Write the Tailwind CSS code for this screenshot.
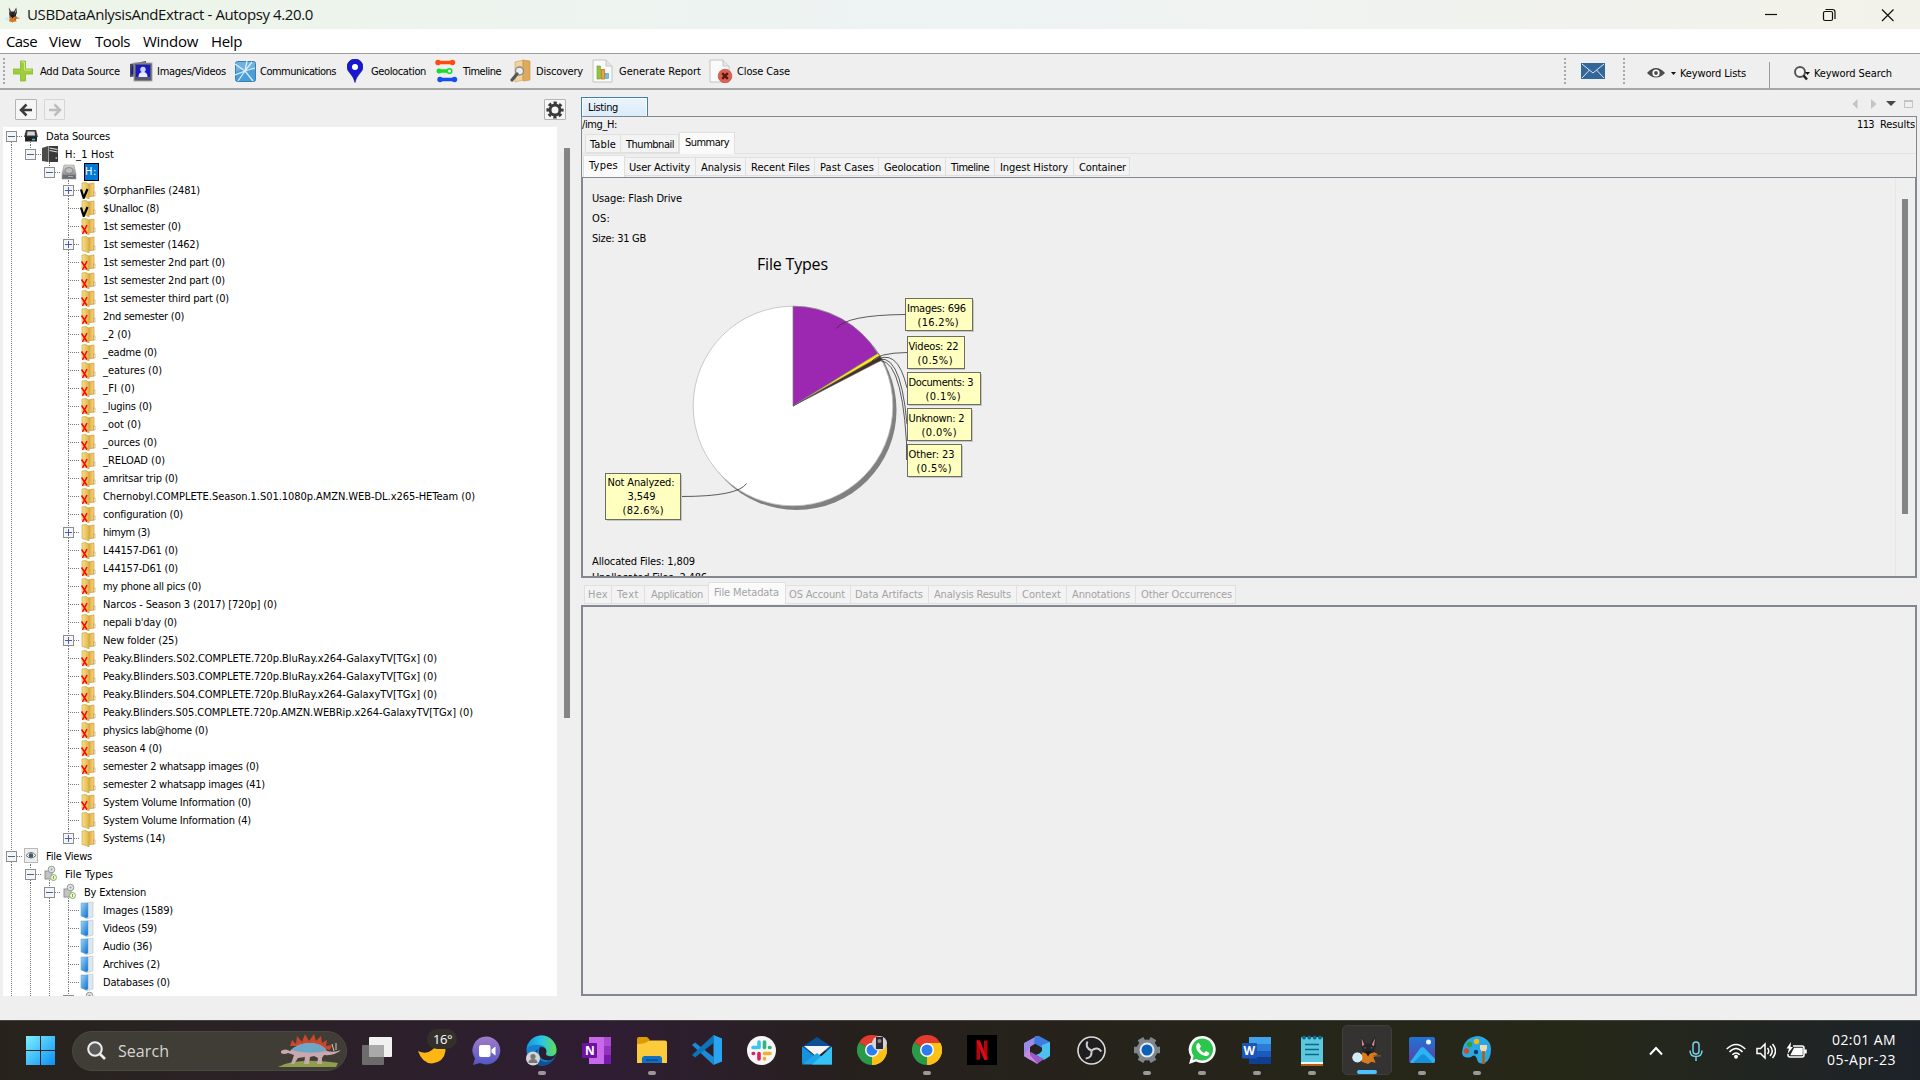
<!DOCTYPE html>
<html lang="en">
<head>
<meta charset="utf-8">
<title>USBDataAnlysisAndExtract - Autopsy 4.20.0</title>
<script src="https://cdn.jsdelivr.net/npm/@tailwindcss/browser@4"></script>
</head>
<body class="w-[1920px] h-[1080px] overflow-hidden bg-[#efefef] flex flex-col text-black font-['DejaVu_Sans_Condensed','DejaVu_Sans',sans-serif] text-[11px] leading-[16px] whitespace-nowrap">

<!-- shared symbols -->
<svg class="absolute w-0 h-0">
  <linearGradient id="gFold" x1="0" x2="1"><stop offset="0" stop-color="#f6e08a"/><stop offset="1" stop-color="#e0b548"/></linearGradient>
  <linearGradient id="gFold2" x1="0" x2="1"><stop offset="0" stop-color="#d9a53c"/><stop offset="1" stop-color="#fbd57a"/></linearGradient>
  <linearGradient id="gBlue" x1="0" x2="1" y2="1"><stop offset="0" stop-color="#9fd4f5"/><stop offset="1" stop-color="#0b6fd0"/></linearGradient>
  <linearGradient id="gGrey" y2="1" x2="0"><stop offset="0" stop-color="#d8d8d8"/><stop offset="1" stop-color="#6f6f74"/></linearGradient>
  <symbol id="dog" viewBox="0 0 28 28">
    <path d="M8.500 1l4 7h5l4-7 1 9-1.500 4v3l2 1-1 1-2 6h-7l-4-5 1-4-1-4z" fill="#23272b"/>
    <path d="M9 3l2.500 6-2 1.500zM21.500 3l-3 6 2 1.500z" fill="#d98c86"/>
    <path d="M10 16l5 2 6-2 3 2-4 3 2 5-4-1-3 2-6-2-1-5z" fill="#d77a1c"/>
    <path d="M12 15h6l-3 5z" fill="#14171a"/><path d="M11.500 12h1.500M17.500 12H19M20 19.500h7" stroke="#8d5a2a" stroke-width="1.200"/>
    <circle cx="5" cy="21" r="4.200" fill="#cdeef7" stroke="#eafaff" stroke-width="1"/>
  </symbol>
  <symbol id="chrome" viewBox="0 0 30 30">
    <path d="M15 15L2 7.500A15 15 0 0 1 28 7.500z" fill="#e33b2e"/>
    <path d="M15 15L28 7.500A15 15 0 0 1 15 30z" fill="#fbc116"/>
    <path d="M15 15L15 30A15 15 0 0 1 2 7.500z" fill="#2a9a48"/>
    <path d="M15 8h13.300a15 15 0 0 1-13 22l6-11z" fill="#fbc116"/><path d="M2 7.500l7 11 6 3.500-1 7.500" fill="#2a9a48"/>
    <circle cx="15" cy="15" r="7" fill="#fff"/><circle cx="15" cy="15" r="5.500" fill="#2d7df0"/>
  </symbol>
</svg>

<!-- title bar -->
<header class="h-[29px] shrink-0 flex items-center bg-linear-to-r from-[#edf5e8] via-[#eef3f4] to-[#f3f2ea]">
  <svg class="ml-1 w-4 h-4"><use href="#dog"/></svg>
  <span class="ml-[7px] mb-px font-['Open_Sans',sans-serif] text-[15px] leading-5 text-[#111]" data-w="286">USBDataAnlysisAndExtract - Autopsy 4.20.0</span>
  <svg class="ml-auto mr-[25px] w-[132px] h-4" fill="none" stroke="#111" stroke-width="1.2">
    <path d="M2 7.500h12"/><rect x="60.500" y="4.500" width="9" height="9" rx="1.500"/><path d="M62.500 2.500h7q2.500 0 2.500 2.500v7"/><path d="M119 2.500l11.500 11.500M130.500 2.500L119 14"/>
  </svg>
</header>

<!-- menu bar -->
<nav class="h-6 shrink-0 bg-white flex items-center pl-1.5 font-['Open_Sans',sans-serif] text-[15px] leading-5">
  <div class="w-[43px]"><span data-w="31">Case</span></div>
  <div class="w-[46px]"><span data-w="32">View</span></div>
  <div class="w-[48px]"><span data-w="35">Tools</span></div>
  <div class="w-[68px]"><span data-w="55">Window</span></div>
  <div><span data-w="31">Help</span></div>
</nav>

<!-- toolbar -->
<div class="h-[37px] shrink-0 border-t border-[#9c9c9c] border-b-2 border-b-[#a6a6a6] flex items-center bg-[#efefef] [&_span]:inline-block [&_span]:pt-0.5">
  <svg class="w-[13px] h-[30px] shrink-0"><path d="M4 2v28" stroke="#a8a8a8" stroke-width="2" stroke-dasharray="2 2"/></svg>
  <svg class="w-5 h-6 shrink-0" viewBox="0 0 20 24"><path d="M7.500 2h5v8H20v5h-7.500v7h-5v-7H0v-5h7.500z" fill="#9fce3a" stroke="#86b52c" stroke-width=".8"/><path d="M8.500 3h3v8h7" stroke="#cdea85" fill="none"/></svg>
  <div class="ml-[7px] w-[88px]"><span data-w="80">Add Data Source</span></div>
  <svg class="w-[25px] h-6 shrink-0" viewBox="0 0 25 24"><path d="M2 5l16-3 1 14-17 2z" fill="#444a60"/><path d="M4 7l12-2v10H3z" fill="#1b1d8c"/><rect x="6" y="4" width="18" height="18" fill="#55596b" stroke="#aaa"/><rect x="8" y="6" width="14" height="12" fill="#1a1ac4"/><circle cx="15" cy="10.500" r="2.700" fill="#cfd4ff"/><path d="M10.500 18q0-5 4.500-5t4.500 5z" fill="#e9ebff"/></svg>
  <div class="ml-1 w-[78px]"><span data-w="69">Images/Videos</span></div>
  <svg class="w-[21px] h-[21px] shrink-0" viewBox="0 0 21 21"><rect x=".5" y=".5" width="20" height="20" rx="2" fill="#4d9ed6" stroke="#357fb8"/><path d="M0 3l10 7L17 1M10 10l10-3M10 10l8 10M10 10L3 20M0 14l10-4 2-10" stroke="#d5edfa" stroke-width="1.300" fill="none"/><path d="M1 1h19v8q-10-4-19 2z" fill="#fff" opacity=".2"/></svg>
  <div class="ml-[4px] w-[87px]"><span data-w="76">Communications</span></div>
  <svg class="w-4 h-6 shrink-0" viewBox="0 0 16 24"><path d="M8 23.500C6.500 16 0 13 0 8a8 8 0 0 1 16 0c0 5-6.500 8-8 15.500z" fill="#1717d0" stroke="#0b0b80" stroke-width=".6"/><circle cx="8" cy="8" r="3" fill="#fff"/></svg>
  <div class="ml-2 w-[64px]"><span data-w="55">Geolocation</span></div>
  <svg class="w-[23px] h-6 shrink-0" viewBox="0 0 23 24" stroke-linecap="round"><path d="M3 3.500h14" stroke="#ff4b12" stroke-width="3.500"/><path d="M4 12h8" stroke="#14e02a" stroke-width="3.500"/><path d="M5 20.500h14" stroke="#1450f0" stroke-width="3.500"/><circle cx="3" cy="3.500" r="2.700" fill="#ff4b12"/><circle cx="17.500" cy="3.500" r="2.700" fill="#ff4b12"/><circle cx="4" cy="12" r="2.500" fill="#14e02a"/><circle cx="14.500" cy="12" r="2.300" fill="#fff" stroke="#14e02a" stroke-width="1.600"/><circle cx="5" cy="20.500" r="2.700" fill="#1450f0"/><circle cx="19.500" cy="20.500" r="2.700" fill="#1450f0"/></svg>
  <div class="ml-[5px] w-[47px]"><span data-w="38">Timeline</span></div>
  <svg class="w-[22px] h-6 shrink-0" viewBox="0 0 22 24"><path d="M5 3l8-2v20l-8 2z" fill="#f3d39c" stroke="#cfa35b" stroke-width=".6"/><path d="M13 1l7 1v19l-7 1z" fill="#e0aa5c" stroke="#c28e42" stroke-width=".6"/><circle cx="9.500" cy="12" r="4" fill="#e8eef2" stroke="#888" stroke-width="1.300"/><path d="M7 15l-5 6" stroke="#555" stroke-width="3.200" stroke-linecap="round"/></svg>
  <div class="ml-[4px] w-[56px]"><span data-w="47">Discovery</span></div>
  <svg class="w-[21px] h-6 shrink-0" viewBox="0 0 21 24"><path d="M1 1h13l6 6v16H1z" fill="#fafafa" stroke="#c4c4c4"/><path d="M14 1v6h6" fill="#e6e6e6" stroke="#c4c4c4"/><rect x="5" y="7" width="3.500" height="13" fill="#8fc53a" stroke="#6d9d28" stroke-width=".6"/><rect x="9.500" y="10.500" width="3" height="9.500" fill="#f2a03a" stroke="#c17618" stroke-width=".8"/><rect x="13.500" y="14.500" width="3" height="5" fill="#63c6ea" stroke="#3a9cc4" stroke-width=".6"/></svg>
  <div class="ml-[6px] w-[90px]"><span data-w="82">Generate Report</span></div>
  <svg class="w-[24px] h-6 shrink-0" viewBox="0 0 24 24"><path d="M1 1h13l6 6v16H1z" fill="#fafafa" stroke="#c4c4c4"/><path d="M14 1v6h6" fill="#e6e6e6" stroke="#c4c4c4"/><circle cx="16" cy="17" r="6.800" fill="#dd6454" stroke="#b8483b" stroke-width=".7"/><path d="M13.200 14.200l5.600 5.600M18.800 14.200l-5.600 5.600" stroke="#5a1810" stroke-width="2.400"/></svg>
  <div class="ml-[4px] w-[60px]"><span data-w="53">Close Case</span></div>
  <div class="ml-auto flex items-center h-full">
    <svg class="w-5 h-[30px]"><path d="M4 2v28" stroke="#a8a8a8" stroke-width="2" stroke-dasharray="2 2"/></svg>
    <svg class="w-6 h-4 mb-[1px]" viewBox="0 0 24 16"><rect width="24" height="16" fill="#336699"/><path d="M1 1l11 9L23 1M1 15l7.500-8M23 15l-7.500-8" stroke="#dce6f0" fill="none"/></svg>
    <svg class="w-[27px] h-[30px]"><path d="M19 2v28" stroke="#a8a8a8" stroke-width="2" stroke-dasharray="2 2"/></svg>
    <svg class="ml-[15px] w-[30px] h-3.5 mt-1" viewBox="0 0 30 14"><path d="M0 7Q9-3 18 7Q9 16 0 7z" fill="#4c4c4c"/><circle cx="9" cy="7" r="3.600" fill="#fff"/><circle cx="9" cy="7" r="1.900" fill="#4c4c4c"/><path d="M24 6h5l-2.500 3z" fill="#111"/></svg>
    <div class="ml-[3px] mt-1 w-[89px]"><span data-w="66">Keyword Lists</span></div>
    <div class="w-px h-[27px] mt-2 bg-[#9c9c9c]"></div>
    <svg class="ml-[24px] w-4 h-4 mt-1" viewBox="0 0 16 16"><circle cx="6" cy="7" r="5" fill="#f4f4f4" stroke="#555" stroke-width="2"/><path d="M9.500 10.500l3.500 4" stroke="#222" stroke-width="2.500"/><path d="M11 7h5l-2.500 3z" fill="#111"/></svg>
    <div class="ml-[4px] mt-1 w-[106px]"><span data-w="78">Keyword Search</span></div>
  </div>
</div>

<!-- work area -->
<main class="h-[930px] shrink-0 flex">
  <!-- explorer -->
  <section class="w-[581px] shrink-0 flex flex-col">
    <div class="h-[37px] shrink-0 flex items-start pt-[9px] pl-[15px] gap-[7px]">
      <div class="w-[22px] h-[21px] border border-[#b4b4b4] bg-[#f6f6f6] rounded-[1px] grid place-items-center"><svg class="w-3.5 h-3.5" fill="none" stroke="#3c3c3c" stroke-width="2.500"><path d="M13 7H3M7.500 1.500L2 7l5.500 5.500"/></svg></div>
      <div class="w-[21px] h-[21px] border border-[#d6d6d6] bg-[#f1f1f1] rounded-[1px] grid place-items-center"><svg class="w-3.5 h-3.5" fill="none" stroke="#bdbdbd" stroke-width="2.500"><path d="M1 7h10M6.500 1.500L12 7l-5.500 5.500"/></svg></div>
      <div class="ml-auto mr-[15px] w-[22px] h-[21px] border border-[#b4b4b4] bg-[#f6f6f6] rounded-[1px] grid place-items-center"><svg class="w-[18px] h-[18px]" viewBox="-9 -9 18 18"><circle r="7.200" fill="none" stroke="#3a3a3a" stroke-width="2.800" stroke-dasharray="3.200 2.455" stroke-dashoffset="1.600"/><circle r="5" fill="none" stroke="#3a3a3a" stroke-width="3"/></svg></div>
    </div>
    <div class="flex pl-[3px]">
      <div id="tree" class="w-[554px] h-[869px] bg-white overflow-hidden"></div>
      <div class="ml-[7px] mt-[21px] w-1.5 h-[570px] bg-[#858585]"></div>
    </div>
  </section>

  <!-- listing -->
  <section class="w-[1336px] shrink-0 flex flex-col">
    <div class="mt-[7px] h-[19px] shrink-0 flex items-end">
      <div class="w-[67px] h-[20px] self-start border border-b-0 border-[#3c7fb1] bg-linear-to-b from-[#ebf4fc] to-[#d9ebfa] ring-1 ring-inset ring-white pl-[6px] pt-[2px]"><span data-w="30">Listing</span></div>
      <div class="flex-1 flex justify-end pr-[3px] pb-[6px]">
        <svg class="w-[62px] h-[12px]"><path d="M5.500 1v10l-5-5z" fill="#c4c4c4"/><path d="M19 1v10l5.500-5z" fill="#c4c4c4"/><path d="M34 3h10l-5 5z" fill="#484848"/><rect x="52.500" y="3" width="8" height="6.500" fill="none" stroke="#c4c4c4"/><path d="M52 3h9" stroke="#c4c4c4" stroke-width="2"/></svg>
      </div>
    </div>
    <div class="h-[462px] shrink-0 border-t border-l border-r border-[#828790] flex flex-col">
      <div class="h-[15px] shrink-0 flex justify-between pr-px"><span data-w="35">/img_H:</span><span class="flex gap-[6px]"><span data-w="17">113</span><span data-w="35">Results</span></span></div>
      <div class="h-[22px] shrink-0 flex items-end pl-[3px] border-b border-[#e2e2e2]">
        <div class="h-[19px] w-[36px] border border-[#e0e0e0] bg-[#f3f3f3] pl-[4px] pt-[2px]"><span data-w="26">Table</span></div>
        <div class="h-[19px] w-[58px] border border-l-0 border-[#e0e0e0] bg-[#f3f3f3] pl-[5px] pt-[2px]"><span data-w="48">Thumbnail</span></div>
        <div class="h-[22px] -mb-px w-[56px] border border-b-0 border-[#e0e0e0] bg-[#fafafa] pl-[5px] pt-[2px]"><span data-w="44">Summary</span></div>
      </div>
      <div class="h-[23px] shrink-0 flex items-end pl-px">
        <div class="h-[22px] w-[42px] border border-b-0 border-[#e0e0e0] bg-[#fafafa] pl-[5px] pt-[2px]"><span data-w="29">Types</span></div>
        <div class="h-[19px] mb-px w-[71px] border-y border-r border-[#e0e0e0] bg-[#f3f3f3] pl-[4px] pt-[2px]"><span data-w="61">User Activity</span></div>
        <div class="h-[19px] mb-px w-[50px] border-y border-r border-[#e0e0e0] bg-[#f3f3f3] pl-[5px] pt-[2px]"><span data-w="40">Analysis</span></div>
        <div class="h-[19px] mb-px w-[69px] border-y border-r border-[#e0e0e0] bg-[#f3f3f3] pl-[5px] pt-[2px]"><span data-w="59">Recent Files</span></div>
        <div class="h-[19px] mb-px w-[64px] border-y border-r border-[#e0e0e0] bg-[#f3f3f3] pl-[5px] pt-[2px]"><span data-w="54">Past Cases</span></div>
        <div class="h-[19px] mb-px w-[67px] border-y border-r border-[#e0e0e0] bg-[#f3f3f3] pl-[5px] pt-[2px]"><span data-w="57">Geolocation</span></div>
        <div class="h-[19px] mb-px w-[49px] border-y border-r border-[#e0e0e0] bg-[#f3f3f3] pl-[5px] pt-[2px]"><span data-w="38">Timeline</span></div>
        <div class="h-[19px] mb-px w-[79px] border-y border-r border-[#e0e0e0] bg-[#f3f3f3] pl-[5px] pt-[2px]"><span data-w="68">Ingest History</span></div>
        <div class="h-[19px] mb-px w-[56px] border-y border-r border-[#e0e0e0] bg-[#f3f3f3] pl-[5px] pt-[2px]"><span data-w="47">Container</span></div>
      </div>
      <div class="flex-1 min-h-0 overflow-hidden border-t border-b-2 border-l border-r border-[#828790] flex">
        <div class="flex-1 pl-[9px] pt-[13px]">
          <p class="h-5"><span data-w="90">Usage: Flash Drive</span></p>
          <p class="h-5"><span data-w="18">OS:</span></p>
          <p class="h-[14px]"><span data-w="54">Size: 31 GB</span></p>
          <svg class="block w-[420px] h-[309px]" viewBox="592 245 420 309">
            <text x="757" y="270" textLength="71" fill="#000" class="font-['Open_Sans',sans-serif] text-[16px]">File Types</text>
            <circle cx="796.500" cy="410" r="100" fill="#808080"/>
            <circle cx="793" cy="406" r="99.800" fill="#fff" stroke="#bdbdbd" stroke-width=".8"/>
            <path d="M793 406V306.200A99.800 99.800 0 0 1 877.900 353.600z" fill="#9c27b0" stroke="#808080" stroke-width=".7"/>
            <path d="M793 406L877.900 353.600A99.800 99.800 0 0 1 879.600 356.400z" fill="#ffee10" stroke="#808080" stroke-width=".6"/>
            <path d="M793 406L880 356.600A99.800 99.800 0 0 1 881.800 360z" fill="#4a2c28" stroke="#555" stroke-width=".6"/>
            <g fill="none" stroke="#333" stroke-width=".8">
              <path d="M836.500 328.500Q846 315 905 314.500"/>
              <path d="M872 361Q878 353 907 352.500"/>
              <path d="M873 362Q897 345 907 388"/>
              <path d="M873 362Q900 345 907 424"/>
              <path d="M874 362Q901 350 906.500 442V460"/>
              <path d="M746.500 483.500Q738 496.500 681 496.500"/>
            </g>
            <g fill="#c6c6c6">
              <rect x="907" y="300" width="67" height="32"/><rect x="909" y="338" width="56" height="32"/><rect x="909" y="374" width="73" height="32"/><rect x="909" y="410" width="64" height="32"/><rect x="909" y="446" width="54" height="32"/><rect x="607" y="475" width="75" height="46"/>
            </g>
            <g fill="#ffffc0" stroke="#6e6e5e">
              <rect x="905.500" y="298.500" width="67" height="32"/><rect x="907.500" y="336.500" width="57" height="32"/><rect x="907.500" y="372.500" width="73" height="32"/><rect x="907.500" y="408.500" width="64" height="32"/><rect x="907.500" y="444.500" width="54" height="32"/><rect x="605.500" y="473.500" width="75" height="46"/>
            </g>
            <g font-size="11" fill="#000">
              <text x="907" y="312" textLength="59">Images: 696</text><text x="917.500" y="326" textLength="41">(16.2%)</text>
              <text x="908.500" y="350" textLength="50">Videos: 22</text><text x="917.500" y="364" textLength="35">(0.5%)</text>
              <text x="908.500" y="386" textLength="65">Documents: 3</text><text x="925.500" y="400" textLength="35">(0.1%)</text>
              <text x="908.500" y="422" textLength="56">Unknown: 2</text><text x="921.500" y="436" textLength="35">(0.0%)</text>
              <text x="908.500" y="458" textLength="46">Other: 23</text><text x="916.500" y="472" textLength="35">(0.5%)</text>
              <text x="607.500" y="486" textLength="67">Not Analyzed:</text><text x="627.500" y="500" textLength="28">3,549</text><text x="622.500" y="514" textLength="41">(82.6%)</text>
            </g>
          </svg>
          <p class="h-4"><span data-w="103">Allocated Files: 1,809</span></p>
          <p class="h-4"><span data-w="115">Unallocated Files: 2,486</span></p>
        </div>
        <div class="w-[20px] border-l border-[#e6e6e6]"><div class="ml-[6px] mt-[21px] w-1.5 h-[315px] bg-[#858585]"></div></div>
      </div>
    </div>

    <!-- content viewers -->
    <div class="h-[27px] shrink-0 flex items-end pl-[3px] pb-px text-[#a3a3a3]">
      <div class="h-[19px] w-[28px] border border-[#e0e0e0] bg-[#f3f3f3] pl-[3px] pt-px"><span data-w="20">Hex</span></div>
      <div class="h-[19px] w-[33px] border-y border-r border-[#e0e0e0] bg-[#f3f3f3] pl-[5px] pt-px"><span data-w="22">Text</span></div>
      <div class="h-[19px] w-[63px] border-y border-[#e0e0e0] bg-[#f3f3f3] pl-[6px] pt-px"><span data-w="52">Application</span></div>
      <div class="h-[22px] w-[78px] border border-b-0 border-[#e0e0e0] bg-[#fafafa] pl-[5px] pt-[2px]"><span data-w="65">File Metadata</span></div>
      <div class="h-[19px] w-[65px] border-y border-r border-[#e0e0e0] bg-[#f3f3f3] pl-[3px] pt-px"><span data-w="56">OS Account</span></div>
      <div class="h-[19px] w-[78px] border-y border-r border-[#e0e0e0] bg-[#f3f3f3] pl-[4px] pt-px"><span data-w="68">Data Artifacts</span></div>
      <div class="h-[19px] w-[88px] border-y border-r border-[#e0e0e0] bg-[#f3f3f3] pl-[5px] pt-px"><span data-w="77">Analysis Results</span></div>
      <div class="h-[19px] w-[50px] border-y border-r border-[#e0e0e0] bg-[#f3f3f3] pl-[5px] pt-px"><span data-w="39">Context</span></div>
      <div class="h-[19px] w-[69px] border-y border-r border-[#e0e0e0] bg-[#f3f3f3] pl-[5px] pt-px"><span data-w="58">Annotations</span></div>
      <div class="h-[19px] w-[100px] border-y border-r border-[#e0e0e0] bg-[#f3f3f3] pl-[5px] pt-px"><span data-w="91">Other Occurrences</span></div>
    </div>
    <div class="h-[391px] shrink-0 border-2 border-[#828790]"></div>
  </section>
</main>

<!-- taskbar -->
<footer class="h-[60px] shrink-0 border-t border-[#45443f] flex items-center text-white font-['Open_Sans',sans-serif] bg-linear-to-r from-[#27231c] from-0% via-[#2f1d33] via-32% to-[#26201d] to-44% relative">
  <div class="absolute inset-0 bg-linear-to-r from-transparent from-44% via-[#262817] via-82% to-[#1d2229] to-100%"></div>
  <div class="relative flex items-center w-full h-full">
    <svg class="ml-[26px] w-[29px] h-[29px] shrink-0" viewBox="0 0 29 29"><linearGradient id="gw" x2="1" y2="1"><stop stop-color="#7df0ff"/><stop offset="1" stop-color="#0a90f5"/></linearGradient><path d="M0 0h14v14H0zM15 0h14v14H15zM0 15h14v14H0zM15 15h14v14H15z" fill="url(#gw)"/></svg>
    <div class="ml-[17px] w-[275px] h-10 rounded-full bg-[#403d36] border border-[#4a4842] flex items-center shrink-0">
      <svg class="ml-[14px] w-[19px] h-[19px]" fill="none" stroke="#eee" stroke-width="2"><circle cx="8" cy="8" r="6.800" fill="#5a5a5a"/><path d="M13 13l5 5" stroke-width="2.600"/></svg>
      <span class="ml-[12px] text-[16px] leading-5 text-[#d6d5d3]" data-w="51">Search</span>
      <svg class="ml-auto mr-[4px] w-[64px] h-[34px]" viewBox="0 0 64 34">
        <path d="M0 33q18-10 60-4l-2 4z" fill="#8f9d4c"/>
        <path d="M12 12l2-6 4 4 1-8 5 6 3-8 4 7 5-7 2 7 5-5 1 7 5-3-1 6 6-1-2 5-20-4z" fill="#c9472c"/>
        <path d="M3 17q4-3 9 0 8-8 20-8 12 0 17 8 7 2 14-1-6 6-17 5l-2 3v6h-5l1-6-4-2-4 1-1 7h-5l1-7-7 1-4 6h-3l3-9-6-2q-4 2-7 0z" fill="#c9a7ae"/>
        <path d="M13 16q8-7 19-7t17 8q-18 4-36-1z" fill="#6da6c6"/>
        <path d="M54 10l2 7M58 9v7" stroke="#d8c9bb"/>
      </svg>
    </div>
    <svg class="ml-[15px] w-[30px] h-[28px] shrink-0" viewBox="0 0 30 28"><rect x="7" width="23" height="20" rx="1" fill="#f1f1f1"/><rect y="8" width="22" height="20" rx="1" fill="#6c6c6c"/><path d="M7 8h15v12H7z" fill="#a9a9a9"/></svg>
    <div class="ml-[26px] w-[41px] h-full relative shrink-0">
      <svg class="absolute top-[19px] left-0 w-7 h-6" viewBox="0 0 28 24"><path d="M0 11q8 4 14-1t3-10Q28 2 27.500 11 26 22 14 23.500 4 23 0 11z" fill="#fdb614"/></svg>
      <div class="absolute left-[9px] top-[8px] w-[30px] h-5 rounded-full bg-[#33302c]"></div>
      <span class="absolute left-[15px] top-[9px] text-[13px] leading-[18px]" data-w="19">16°</span>
    </div>

    <!-- pinned and running apps -->
    <div class="flex h-full">
      <div class="w-[55px] h-full flex flex-col items-center pt-[15px]"><svg class="w-[30px] h-[30px]" viewBox="0 0 30 30"><linearGradient id="gc" x2="0" y2="1"><stop stop-color="#a27bc8"/><stop offset="1" stop-color="#4f57c8"/></linearGradient><path d="M15 .5a14 14 0 1 1-7 26.500l-7 2 2-6.500A14 14 0 0 1 15 .5z" fill="url(#gc)"/><rect x="7" y="9" width="11.500" height="12" rx="2" fill="#fff"/><path d="M19.500 13.500l4-3v9l-4-3z" fill="#fff"/></svg></div>
      <div class="w-[55px] h-full flex flex-col items-center pt-[14px]"><svg class="w-[31px] h-[31px]" viewBox="0 0 31 31"><linearGradient id="ge" x1="0" x2="1"><stop stop-color="#1794d8"/><stop offset=".5" stop-color="#2cc4e6"/><stop offset="1" stop-color="#5fe04f"/></linearGradient><circle cx="15.500" cy="15.500" r="15" fill="#1480cf"/><path d="M.6 14A15 15 0 0 1 30.500 15q0 6-6 6-6-.5-4.500-3.500 1-7-6-7.500Q5 9 .6 14z" fill="url(#ge)"/><path d="M12 14q-3 8 4 12 6 2.500 12-2-5 7.500-13 7-8-1-8-9 0-5 5-8z" fill="#114f92"/><path d="M14 12q7 0 6.500 5-2 4 4 4.500 4-.3 5.500-3-1 6-7 7-9 0-10-7-.5-4 1-6.500z" fill="#2a1d30"/><circle cx="7" cy="23.500" r="7" fill="#d4d4d4"/><circle cx="7" cy="21.500" r="2.600" fill="#777"/><path d="M2.500 28q0-4 4.500-4t4.500 4z" fill="#777"/></svg><i class="mt-[5px] w-2 h-1 rounded-full bg-[#9c9899]"></i></div>
      <div class="w-[55px] h-full flex flex-col items-center pt-[15px]"><svg class="w-[29px] h-[29px]" viewBox="0 0 29 29"><path d="M7 1h15v27H7z" fill="#c969ea"/><path d="M22 1h7v9h-7z" fill="#ae4bd5"/><path d="M22 10h7v9h-7z" fill="#9332bf"/><path d="M22 19h7v9h-7z" fill="#7719aa"/><rect y="7" width="15" height="15" rx="1" fill="#6f12a4"/><text x="3" y="19" font-size="12" font-weight="700" fill="#fff">N</text></svg></div>
      <div class="w-[55px] h-full flex flex-col items-center pt-[15px]"><svg class="w-[30px] h-[30px]" viewBox="0 0 30 30"><path d="M0 3q0-2 2-2h8l3 3h-1v6H0z" fill="#dd9b08"/><path d="M0 8q9 0 12-3.500h16q2 0 2 2V27H0z" fill="#fccb3c"/><path d="M5 27v-4q0-3 3-3h14q3 0 3 3v4z" fill="#1170c4"/><path d="M9 24h12" stroke="#0a4a8a" stroke-width="1.500"/></svg><i class="mt-[5px] w-2 h-1 rounded-full bg-[#9c9899]"></i></div>
      <div class="w-[55px] h-full flex flex-col items-center pt-[14px]"><svg class="w-[30px] h-[30px]" viewBox="0 0 30 30"><path d="M0 10l3-2.500 18.500 14.500v8z" fill="#1b8ada"/><path d="M0 20l3 2.500L21.500 8V0z" fill="#0b74ba"/><path d="M21.500 0L30 3.500v23L21.500 30z" fill="#27a4f2"/></svg></div>
      <div class="w-[55px] h-full flex flex-col items-center pt-[15px]"><svg class="w-[29px] h-[29px]" viewBox="0 0 29 29" stroke-width="3.600" stroke-linecap="round"><circle cx="14.500" cy="14.500" r="14.500" fill="#f6f6f6" stroke="none"/><path d="M12 6v5.500M6 11.500h4" stroke="#36c5f0"/><path d="M17.500 6v5.500M23 11.500h-.5" stroke="#2eb67d"/><path d="M17.500 17.500H23M17.500 23v-.5" stroke="#ecb22e"/><path d="M12 17.500V23M6.200 17.500h.4" stroke="#e01e5a"/></svg></div>
      <div class="w-[55px] h-full flex flex-col items-center pt-[15px]"><svg class="w-[30px] h-[30px]" viewBox="0 0 30 30"><path d="M0 11L15 1l15 10v4H0z" fill="#0c4f93"/><path d="M2 10h26L15 21z" fill="#f4f4f4"/><path d="M0 10.500l15 11L0 28z" fill="#1593e0"/><path d="M0 28.500h30L15 17z" fill="#1fa6ea"/><path d="M30 10.500L10 28.500h20z" fill="#36c3f4"/></svg></div>
      <div class="w-[55px] h-full flex flex-col items-center pt-[14px] relative"><svg class="w-[30px] h-[30px]"><use href="#chrome"/></svg><svg class="absolute left-[28px] top-[15px] w-[15px] h-[15px]"><circle cx="7.500" cy="7.500" r="7.500" fill="#d5d5d5"/><path d="M4 1h7v12H4z" fill="#252a33"/><circle cx="7.500" cy="5" r="2" fill="#9d8078"/></svg></div>
      <div class="w-[55px] h-full flex flex-col items-center pt-[14px]"><svg class="w-[30px] h-[30px]"><use href="#chrome"/></svg><i class="mt-[6px] w-2 h-1 rounded-full bg-[#9c9899]"></i></div>
      <div class="w-[55px] h-full flex flex-col items-center pt-[14px]"><svg class="w-[30px] h-[30px]" viewBox="0 0 30 30"><rect width="30" height="30" fill="#000"/><path d="M9.500 5.500h3.500v19l-3.500.5zM17 5.500h3.500V25L17 24.500z" fill="#b20710"/><path d="M9.500 5.500H13l7.500 19.500-3.500-.5z" fill="#e50914"/></svg></div>
      <div class="w-[55px] h-full flex flex-col items-center pt-[15px]"><svg class="w-[28px] h-[29px]" viewBox="0 0 28 29"><path d="M14 0L1 7v13l6 4V11l9-6z" fill="#9b8be8"/><path d="M12 0h4l11 6v10l-8-4-8-5z" fill="#3f7ce0"/><path d="M27 6v14l-6 4-8-5 6-4V9z" fill="#4cc0ee"/><path d="M1 20l7-4 7 4 6 3-7 5z" fill="#9a58c8"/><path d="M1 20l6-9v8l8 9z" fill="#c48cda"/><circle cx="14" cy="14" r="4.300" fill="#25221f"/></svg></div>
      <div class="w-[55px] h-full flex flex-col items-center pt-[15px]"><svg class="w-[29px] h-[29px]" viewBox="-14.500 -14.500 29 29"><circle r="13.500" fill="#201e1f" stroke="#dcdcdc" stroke-width="1.600"/><g fill="none" stroke="#cfcfcf" stroke-width="2"><path d="M0 0q-7-3-4-9"/><path d="M0 0q-7-3-4-9" transform="rotate(120)"/><path d="M0 0q-7-3-4-9" transform="rotate(240)"/></g></svg></div>
      <div class="w-[55px] h-full flex flex-col items-center pt-[14px]"><svg class="w-[30px] h-[30px]" viewBox="-15 -15 30 30"><circle r="10.500" fill="#7d868d"/><g stroke="#7d868d" stroke-width="6.500" stroke-linejoin="round"><path d="M-13-0H13"/><path d="M-13-0H13" transform="rotate(60)"/><path d="M-13-0H13" transform="rotate(120)"/></g><circle r="7.500" fill="#e6e9eb"/><circle r="5.500" fill="#0c60b5"/></svg><i class="mt-[6px] w-2 h-1 rounded-full bg-[#9c9899]"></i></div>
      <div class="w-[55px] h-full flex flex-col items-center pt-[14px]"><svg class="w-[28px] h-[30px]" viewBox="0 0 28 30"><path d="M14 1a13.500 13.500 0 1 1-6 25.500L1 29l2-7A13.500 13.500 0 0 1 14 1z" fill="#fff"/><path d="M14 3.500a11 11 0 1 1-5.500 20.500L4.500 25l1.200-4A11 11 0 0 1 14 3.500z" fill="#2cc64e"/><path d="M9 8.500l2-.5 2 3.500-1.500 2q1.500 3 4.500 4.500l2-2 3.500 2q-.5 3-3.500 3-5-.5-8-4.500-3-4-1-8z" fill="#fff"/></svg><i class="mt-[6px] w-2 h-1 rounded-full bg-[#9c9899]"></i></div>
      <div class="w-[55px] h-full flex flex-col items-center pt-[15px]"><svg class="w-[29px] h-[29px]" viewBox="0 0 29 29"><path d="M7 1h22v7H7z" fill="#41a5ee"/><path d="M7 8h22v7H7z" fill="#2b7cd3"/><path d="M7 15h22v6.500H7z" fill="#185abd"/><path d="M7 21.500h22V28H7z" fill="#103f91"/><rect y="7" width="15" height="15.500" rx="1" fill="#1a56b8"/><text x="1.500" y="19" font-size="12" font-weight="700" fill="#fff">W</text></svg><i class="mt-[6px] w-2 h-1 rounded-full bg-[#9c9899]"></i></div>
      <div class="w-[55px] h-full flex flex-col items-center pt-[14px]"><svg class="w-[22px] h-[31px]" viewBox="0 0 22 31"><path d="M0 28h22v3H0z" fill="#b55f12"/><rect y="26" width="22" height="3" fill="#f6f6f6"/><path d="M0 3q0-1 1-1h20q1 0 1 1v24H0z" fill="#5cc7de"/><path d="M4 9.500h14M4 14.500h14M4 19.500h14" stroke="#0b6a86" stroke-width="1.600"/><g fill="#0b6a86"><circle cx="3" cy="2.500" r="1.900"/><circle cx="8.300" cy="2.500" r="1.900"/><circle cx="13.700" cy="2.500" r="1.900"/><circle cx="19" cy="2.500" r="1.900"/></g></svg><i class="mt-[5px] w-2 h-1 rounded-full bg-[#9c9899]"></i></div>
      <div class="w-[55px] h-full flex justify-center pt-[4px]"><div class="w-[50px] h-[50px] rounded-[5px] bg-[#343331] border border-[#3f3e3b] flex flex-col items-center pt-[9px]"><svg class="w-[30px] h-[30px]"><use href="#dog"/></svg><i class="mt-[5px] w-5 h-1 shrink-0 rounded-full bg-[#4cc2ff]"></i></div></div>
      <div class="w-[55px] h-full flex flex-col items-center pt-[16px]"><svg class="w-[26px] h-[26px]" viewBox="0 0 26 26"><linearGradient id="gp" x2="0" y2="1"><stop stop-color="#1f74d4"/><stop offset="1" stop-color="#5d3fa8"/></linearGradient><rect width="26" height="26" rx="2" fill="url(#gp)"/><path d="M1 25L11.500 11q2-2 4 0L26 22v2q0 2-2 2H2z" fill="#2bb4f4"/><path d="M4 26l8-8q2-1.500 4 0l8 8z" fill="#1690dc"/><circle cx="19.500" cy="5" r="2.500" fill="#eef6ff"/></svg><i class="mt-[8px] w-2 h-1 rounded-full bg-[#9c9899]"></i></div>
      <div class="w-[55px] h-full flex flex-col items-center pt-[15px]"><svg class="w-[29px] h-[29px]" viewBox="0 0 29 29"><path d="M15 0a14 13 0 0 1 14 13q0 10-6 14-7 2-8-4-2-6-6-2-8 2-9-4Q1 2 15 0z" fill="#2aa8e6"/><circle cx="7.500" cy="8.500" r="2.700" fill="#32a02c"/><circle cx="14.500" cy="5.500" r="2.700" fill="#f6b912"/><circle cx="4.500" cy="15" r="2.700" fill="#d24a2a"/><circle cx="14" cy="16" r="2.200" fill="#123c60"/><path d="M18 9h7v4l-2 3h-3l-2-3z" fill="#f0d9b5"/><path d="M21.500 15v13" stroke="#b06012" stroke-width="2.600"/></svg><i class="mt-[6px] w-2 h-1 rounded-full bg-[#9c9899]"></i></div>
    </div>

    <!-- tray -->
    <div class="ml-auto flex items-center shrink-0">
      <svg class="w-3.5 h-3 mr-[26px]" fill="none" stroke="#fff" stroke-width="2"><path d="M1 9.500l6-6.500 6 6.500"/></svg>
      <svg class="w-[14px] h-5 mr-[23px]" fill="none" stroke="#79d0ea" stroke-width="1.500"><rect x="4" y="1" width="6" height="12" rx="3"/><path d="M1 9.500q0 6 6 6t6-6M7 15.500V20"/></svg>
      <svg class="w-5 h-4 mr-[10px]" fill="none" stroke="#fff" stroke-width="1.500"><path d="M.7 6Q10-3 19.300 6M3.500 9Q10 2 16.500 9M6.300 11.800Q10 8 13.700 11.800"/><circle cx="10" cy="13.800" r="1.200" fill="#fff"/></svg>
      <svg class="w-5 h-[18px] mr-[10px]" fill="none" stroke="#fff" stroke-width="1.500"><path d="M1 6.500h3.500L9 2v14l-4.500-4.500H1zM11.500 6q2.500 3 0 6M14 4q4.500 5 0 10M16.500 2q6 7 0 14"/></svg>
      <svg class="w-[21px] h-[18px] mr-[19px]" fill="none" stroke="#fff" stroke-width="1.500"><path d="M7 4h9q2 0 2 2v7q0 2-2 2H4q-2 0-2-2v-1"/><path d="M8.500 6.500H16v6H5.500z" fill="#fff"/><path d="M19.500 7.500v4" stroke-width="2.500"/><path d="M5 0L.5 6.500H3L1.500 12 7 5H4.500z" fill="#fff" stroke="none"/></svg>
      <div class="w-[70px] mr-[24px] mb-px text-right text-[14px] leading-5"><div><span data-w="64">02:01 AM</span></div><div><span data-w="69">05-Apr-23</span></div></div>
    </div>
  </div>
</footer>

<script>
  // [depth, label, width, icon, expander, ancestor guide columns, last child]
  const rows = [
    [0, "Data Sources", 64, "drive", "-", []],
    [1, "H:_1 Host", 49, "host", "-", [0], 1],
    [2, "H:", 12, "disk", "-", [0], 1],
  ];
  const files = [
    ["$OrphanFiles (2481)", 97, "v", "+"], ["$Unalloc (8)", 56, "v"], ["1st semester (0)", 78, "x"],
    ["1st semester (1462)", 96, "f", "+"], ["1st semester 2nd part (0)", 122, "x"], ["1st semester 2nd part (0)", 122, "x"],
    ["1st semester third part (0)", 126, "x"], ["2nd semester (0)", 81, "x"], ["_2 (0)", 28, "x"], ["_eadme (0)", 54, "x"],
    ["_eatures (0)", 59, "x"], ["_FI (0)", 32, "x"], ["_lugins (0)", 49, "x"], ["_oot (0)", 38, "x"], ["_ources (0)", 54, "x"],
    ["_RELOAD (0)", 62, "x"], ["amritsar trip (0)", 75, "x"],
    ["Chernobyl.COMPLETE.Season.1.S01.1080p.AMZN.WEB-DL.x265-HETeam (0)", 372, "x"], ["configuration (0)", 80, "x"],
    ["himym (3)", 47, "f", "+"], ["L44157-D61 (0)", 75, "x"], ["L44157-D61 (0)", 75, "x"], ["my phone all pics (0)", 98, "x"],
    ["Narcos - Season 3 (2017) [720p] (0)", 174, "x"], ["nepali b'day (0)", 74, "x"], ["New folder (25)", 75, "f", "+"],
    ["Peaky.Blinders.S02.COMPLETE.720p.BluRay.x264-GalaxyTV[TGx] (0)", 334, "x"],
    ["Peaky.Blinders.S03.COMPLETE.720p.BluRay.x264-GalaxyTV[TGx] (0)", 334, "x"],
    ["Peaky.Blinders.S04.COMPLETE.720p.BluRay.x264-GalaxyTV[TGx] (0)", 334, "x"],
    ["Peaky.Blinders.S05.COMPLETE.720p.AMZN.WEBRip.x264-GalaxyTV[TGx] (0)", 370, "x"],
    ["physics lab@home (0)", 105, "x"], ["season 4 (0)", 59, "x"], ["semester 2 whatsapp images (0)", 156, "x"],
    ["semester 2 whatsapp images (41)", 162, "f"], ["System Volume Information (0)", 148, "x"],
    ["System Volume Information (4)", 148, "f"], ["Systems (14)", 62, "f", "+"],
  ];
  files.forEach((f, i) => rows.push([3, f[0], f[1], f[2], f[3], [0], i === files.length - 1]));
  rows.push([0, "File Views", 46, "eye", "-", []], [1, "File Types", 48, "types", "-", [0]], [2, "By Extension", 62, "types", "-", [0, 1]]);
  [["Images (1589)", 70], ["Videos (59)", 54], ["Audio (36)", 49], ["Archives (2)", 57], ["Databases (0)", 67]]
    .forEach(f => rows.push([3, f[0], f[1], "filter", "", [0, 1, 2]]));
  rows.push([3, "", 0, "types", "-", [0, 1, 2]]);

  const folder = '<path d="M9 3l6-1v13l-6 1z" fill="url(#gFold2)" stroke="#c39b45" stroke-width=".7"/><path d="M3 2l4-.5 3 2v14.500l-3-1.500-4-1z" fill="url(#gFold)" stroke="#c9a64b" stroke-width=".7"/><path d="M14.500 11h1.500v4h-1.500z" fill="#fff" stroke="#b58d3b" stroke-width=".6"/>';
  const icons = {
    f: folder,
    x: folder + '<path d="M2.500 8.500L8 16.500M8 8L3.500 17" stroke="#f00" stroke-width="1.500"/>',
    v: folder + '<path d="M2 8.500l2.700 8.500L8.500 8" fill="none" stroke="#000" stroke-width="2.200"/>',
    drive: '<path d="M4 3h10l2 7H2z" fill="#3d3d3d"/><path d="M5.500 4.500h7l.6 4H5z" fill="#d6d6d6"/><rect x="3" y="9.500" width="12" height="5" fill="#222"/><path d="M10 12.500h3" stroke="#3fc0d0" stroke-width="1.500"/>',
    host: '<path d="M1 3l6-2v16l-6-1z" fill="#4b4b4b"/><path d="M7.500 1H17v16H7.500z" fill="#3a3a3a"/><path d="M8.500 3l8 1.500M8.500 5.500l8 1.500" stroke="#ddd" stroke-width="1.200"/><path d="M14.500 13h1.500" stroke="#fff"/>',
    disk: '<path d="M4 2h10l2 9v5H2v-5z" fill="url(#gGrey)" stroke="#888" stroke-width=".5"/><ellipse cx="9" cy="7.500" rx="4" ry="3" fill="#bdbdbd" stroke="#777" stroke-width=".7"/><path d="M3 12h12v3H3z" fill="#6c6c70"/><path d="M8 13.500h5" stroke="#aaa"/>',
    eye: '<rect x="2.500" y="1.500" width="13" height="14" fill="#eee" stroke="#b9b9b9"/><path d="M4 8.500q5-6 10 0-5 5-10 0z" fill="#fff" stroke="#666"/><circle cx="9" cy="8.500" r="2.300" fill="#3c5a68"/>',
    types: '<rect x="4" y="6" width="7" height="8" fill="#c4c4c4" stroke="#909090"/><circle cx="10.500" cy="4.500" r="3.300" fill="#dfe4e6" stroke="#999"/><circle cx="10.500" cy="4.500" r="1" fill="#999"/><circle cx="12.500" cy="12.500" r="3" fill="#eaf5dc" stroke="#8fb25c"/><path d="M12.500 11v3" stroke="#7ba943"/>',
    filter: '<path d="M7 2l7-1v15l-7 2z" fill="#dfe7ec" stroke="#b9c4cb" stroke-width=".6"/><path d="M2 2h7v14l-2 1-5-2z" fill="url(#gBlue)" stroke="#5a9fd0" stroke-width=".5"/>',
  };
  const dot = d => `<path d="${d}" stroke="#777" stroke-dasharray="1 1" shape-rendering="crispEdges"/>`;
  const box = s => `<rect x="3.500" y="4.500" width="10" height="10" fill="#f5f5f5" stroke="#8e8e8e"/><path d="M5 9.500h7${s === "+" ? "M8.500 6v7" : ""}" stroke="#4060a8"/>`;

  document.getElementById("tree").innerHTML = rows.map(([d, label, w, icon, exp, guides, last], i) => {
    let cells = "";
    for (let c = 0; c < d; c++)
      cells += `<svg class="w-[19px] h-[18px] shrink-0">${guides.includes(c) ? dot("M8.500 0v18") : ""}</svg>`;
    cells += `<svg class="w-[19px] h-[18px] shrink-0">${i ? dot("M8.500 0v9") : ""}${last ? "" : dot("M8.500 9v9")}${dot("M8 9.500h11")}${exp ? box(exp) : ""}</svg>`;
    const stem = exp === "-" ? dot("M8.500 15v3") : "";
    const text = i === 2
      ? `<span class="w-[15px] h-[18px] bg-[#0078d7] border border-black text-white leading-4"><span data-w="${w}">${label}</span></span>`
      : `<span class="pt-px" data-w="${w}">${label}</span>`;
    return `<div class="h-[18px] flex items-center">${cells}<svg class="w-6 h-[18px] shrink-0">${stem}${icons[icon]}</svg>${text}</div>`;
  }).join("");

  function fit() {
    if (getComputedStyle(document.body).fontSize !== "11px") return requestAnimationFrame(fit);
    document.querySelectorAll("[data-w]").forEach(el => {
      const w = +el.dataset.w, n = el.textContent.length;
      if (!w) return;
      el.style.letterSpacing = "0px";
      el.style.letterSpacing = ((w - el.getBoundingClientRect().width) / n) + "px";
    });
  }
  fit();
  addEventListener("load", fit);
</script>
</body>
</html>
